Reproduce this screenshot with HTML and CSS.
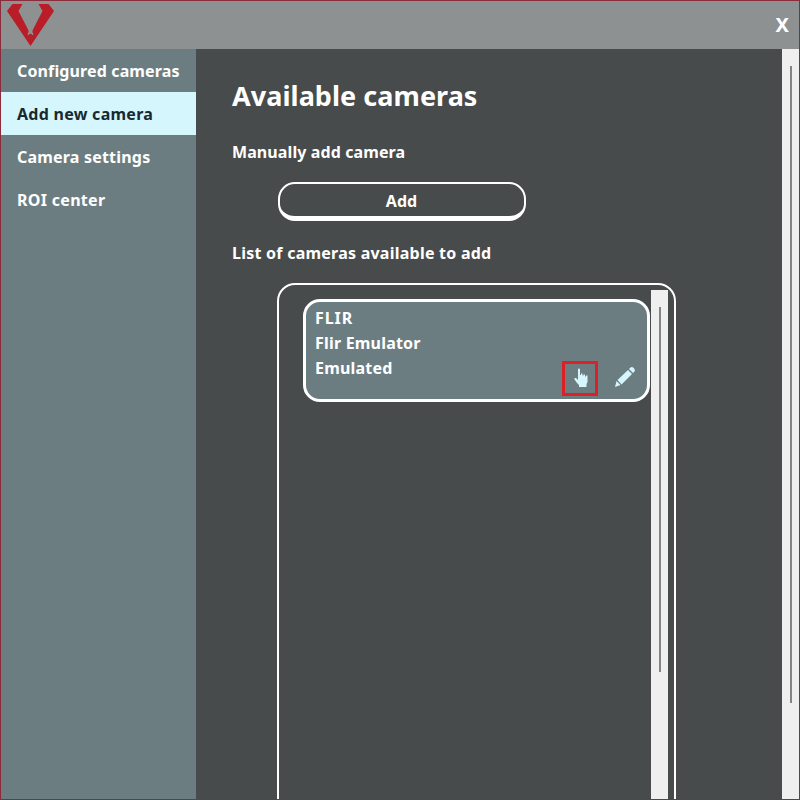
FILE: index.html
```html
<!DOCTYPE html>
<html lang="en">
<head>
<meta charset="utf-8">
<title>Available cameras</title>
<link rel="stylesheet" href="styles.css">
</head>
<body>
<div class="window">
  <header class="titlebar">
    <svg class="logo" width="48" height="43" viewBox="0 0 48 43" aria-hidden="true">
      <path fill="#b91d27" d="M5.500 1H15.500L11.500 8L21.500 27.500V29.500Q20 30.500 21 32.500Q22 30.800 23.500 30.800T26 32.500Q27 30.500 25.500 29.500V27.500L35.500 8L31.500 1H41.500L47 8L23.500 43L0 8Z"/>
    </svg>
    <button class="close">X</button>
  </header>
  <div class="body">
    <nav class="sidebar">
      <a class="item configured">Configured cameras</a>
      <a class="item active">Add new camera</a>
      <a class="item">Camera settings</a>
      <a class="item roi">ROI center</a>
    </nav>
    <main class="content">
      <h1>Available cameras</h1>
      <h2 class="manual">Manually add camera</h2>
      <button class="add">Add</button>
      <h2 class="available">List of cameras available to add</h2>
      <section class="list">
        <article class="card">
          <div class="brand">FLIR</div>
          <div>Flir Emulator</div>
          <div>Emulated</div>
          <div class="actions">
            <span class="select">
              <svg width="14" height="20" viewBox="0 0 14 20"><path fill="#d6f6fd" d="M4 1.500Q4 .5 5 .5T6 1.500V7H7V5.500H8.500V7.500H9.500V6.500H11V8.500H12V7.500H13.500V14L12.500 16V19H5V17L3 15L.5 11.500V10H2L4 12Z"/></svg>
            </span>
            <svg class="edit" width="22" height="22" viewBox="0 0 22 22"><path fill="#d6f6fd" d="M1 21L2.500 15L6.500 19ZM3.500 14L14 4L18 8L7.500 18.500ZM15 3L16.500 1.500Q18 .3 19.500 1.800L20.500 3Q21.500 4.500 20.300 5.700L19 7Z"/></svg>
          </div>
        </article>
        <div class="track list-track"><div class="thumb"></div></div>
      </section>
    </main>
    <div class="track page-track"><div class="thumb"></div></div>
  </div>
</div>
</body>
</html>
```
FILE: styles.css
```css
* { box-sizing: border-box; }
body {
  margin: 0;
  font: 700 16px/25px "Noto Sans", sans-serif;
  letter-spacing: 0.2px;
  color: #fff;
}
.window {
  height: 800px;
  border: 1px solid #8b2c3a;
  display: flex;
  flex-direction: column;
  overflow: hidden;
  background: #484b4b;
}
.titlebar {
  height: 48px;
  flex: none;
  background: #8d9192;
  display: flex;
  justify-content: space-between;
  padding: 2px 10px 0 6px;
}
button {
  font: inherit;
  color: inherit;
  background: none;
  padding: 0;
}
.close {
  border: 0;
  font-size: 20px;
  height: 42px;
}
.body { flex: 1; min-height: 0; display: flex; }
.sidebar { width: 195px; background: #6c7d81; }
.item {
  display: block;
  height: 43px;
  line-height: 45px;
  padding-left: 16px;
  white-space: nowrap;
}
.configured { letter-spacing: 0.13px; }
.roi { letter-spacing: 0.3px; }
.active { background: #d5f6fd; color: #172a30; letter-spacing: 0.27px; }
.content { flex: 1; padding: 29px 0 0 36px; }
h1 { margin: 0; font-size: 27px; line-height: 36px; font-weight: 700; letter-spacing: 0.05px; }
h2 { margin: 0; font-size: 16px; line-height: 24px; font-weight: 700; }
.manual { margin-top: 26px; letter-spacing: 0.1px; }
.add {
  display: block;
  width: 248px;
  height: 39px;
  margin: 18px 0 0 45.500px;
  border: 2px solid #fff;
  border-bottom-width: 5px;
  border-radius: 17px;
  padding-top: 2px;
}
.available { margin-top: 20px; letter-spacing: 0.24px; }
.list {
  width: 399px;
  height: 560px;
  margin: 18px 0 0 45px;
  border: 2px solid #fff;
  border-radius: 18px;
  padding: 5px 6px 0 24px;
  display: flex;
}
.card {
  width: 347px;
  height: 103px;
  margin-top: 9px;
  border: 3px solid #fff;
  border-radius: 17px;
  background: #6c7d81;
  padding: 4px 9px;
}
.brand { letter-spacing: 0.9px; }
.actions {
  display: flex;
  justify-content: flex-end;
  align-items: center;
  gap: 16px;
  margin-top: -20px;
  padding-right: 2px;
}
.select {
  width: 36px;
  height: 35px;
  border: 3px solid #df1f26;
  padding: 0 0 2px 2px;
  display: grid;
  place-items: center;
}
.edit { margin-bottom: 4px; }
.track { background: #efeff0; display: flex; justify-content: center; }
.thumb { width: 2px; background: #858585; margin-top: 17px; }
.list-track { width: 17px; margin-left: 1px; flex: none; }
.list-track .thumb { height: 365px; }
.page-track { width: 17px; }
.page-track .thumb { height: 637px; }
```
